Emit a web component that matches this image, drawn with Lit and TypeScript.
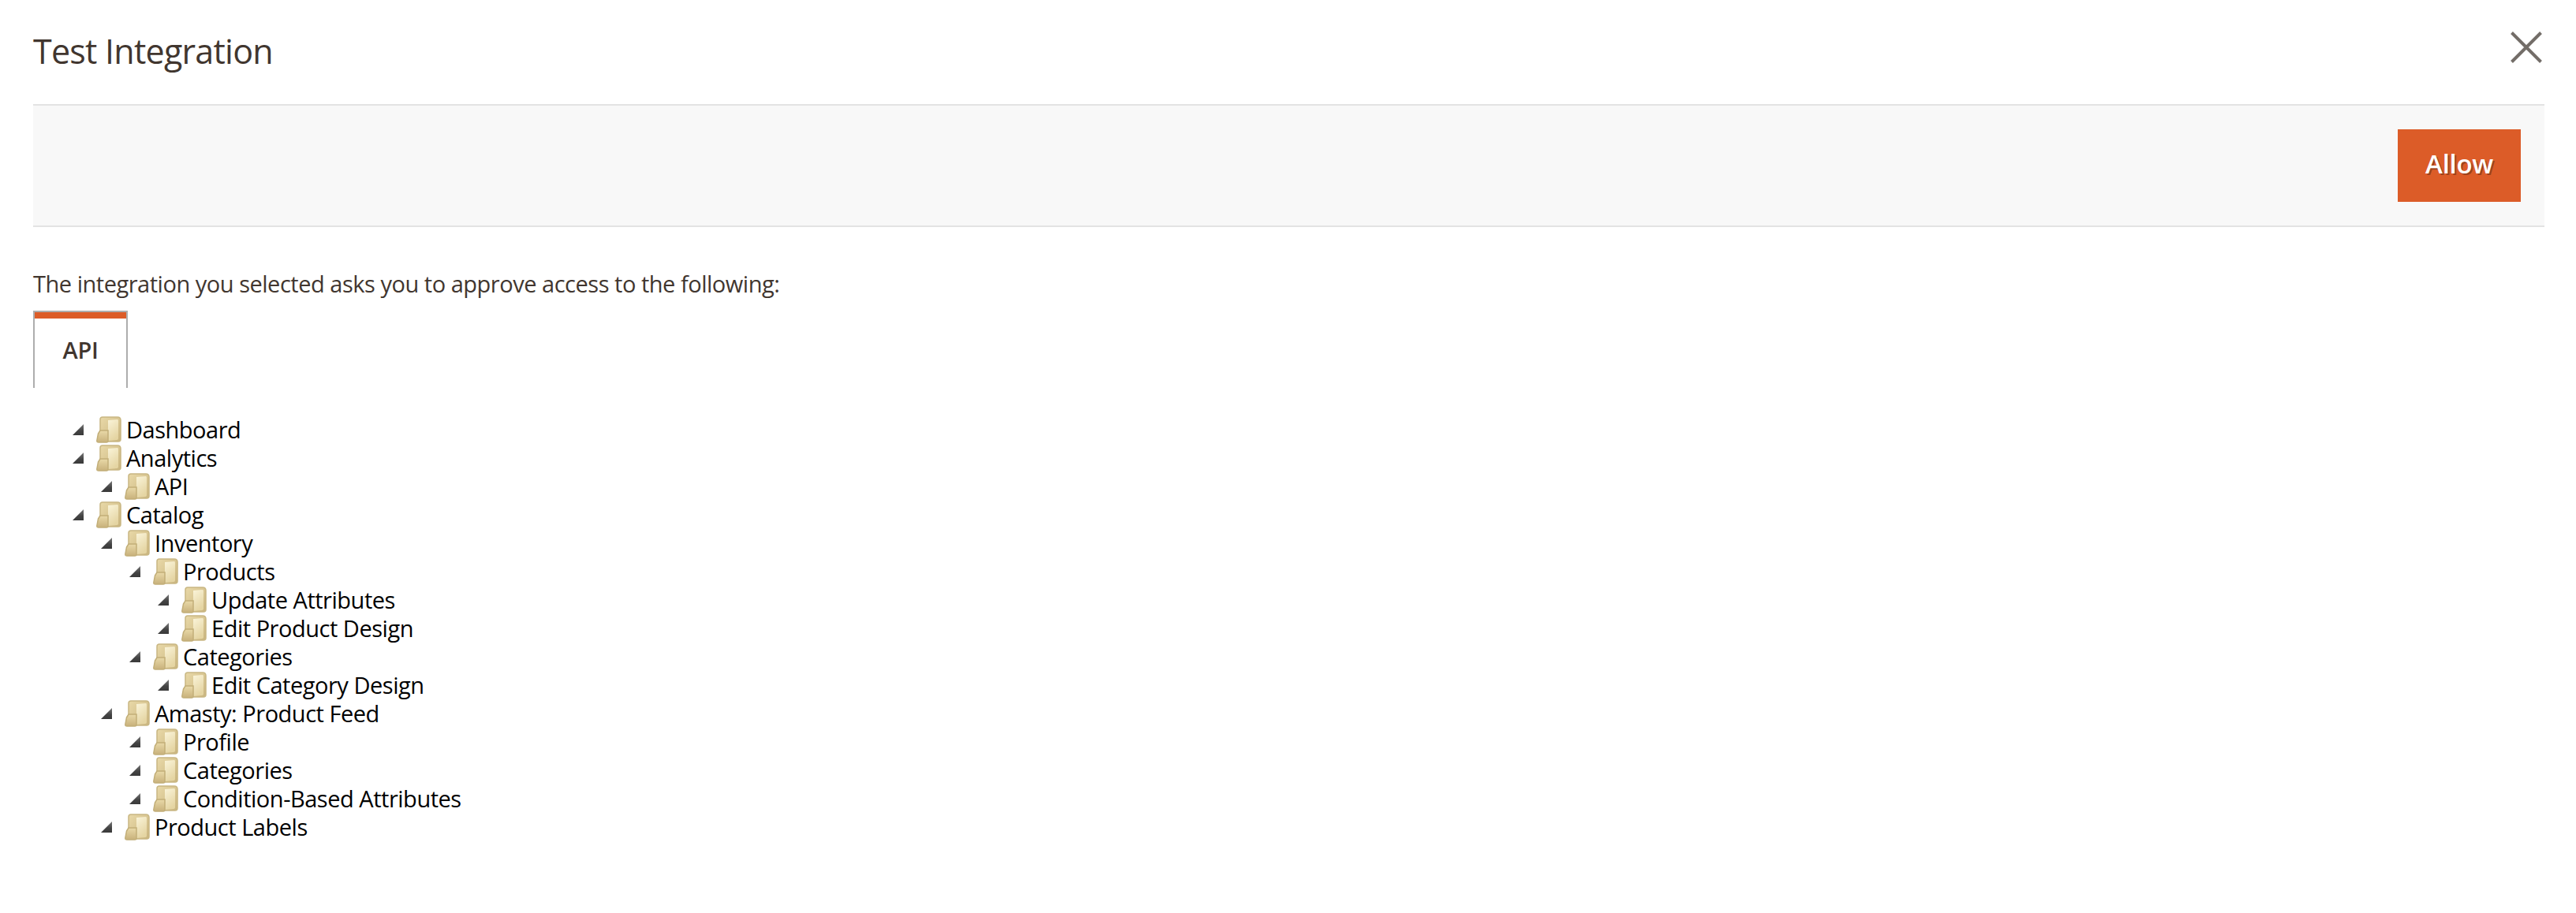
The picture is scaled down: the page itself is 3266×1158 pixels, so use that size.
import { LitElement, html, css, svg } from "lit";
import { customElement } from "lit/decorators.js";

type Node = { t: string; c?: Node[] };
const tree: Node[] = [
  { t: "Dashboard" },
  { t: "Analytics", c: [{ t: "API" }] },
  {
    t: "Catalog",
    c: [
      {
        t: "Inventory",
        c: [
          { t: "Products", c: [{ t: "Update Attributes" }, { t: "Edit Product Design" }] },
          { t: "Categories", c: [{ t: "Edit Category Design" }] },
        ],
      },
      {
        t: "Amasty: Product Feed",
        c: [{ t: "Profile" }, { t: "Categories" }, { t: "Condition-Based Attributes" }],
      },
      { t: "Product Labels" },
    ],
  },
];

const arrow = svg`<svg class="arrow" width="14" height="14" viewBox="0 0 14 14"><defs><linearGradient id="ag" x1="0" y1="0" x2="0" y2="1"><stop offset="0" stop-color="#777"/><stop offset="0.6" stop-color="#444"/><stop offset="1" stop-color="#3a3a3a"/></linearGradient></defs><path d="M14 0 L14 14 L0 14 Z" fill="url(#ag)"/></svg>`;

const folder = svg`<svg class="folder" width="32" height="34" viewBox="0 0 32 34"><defs>
<linearGradient id="fb" x1="0" y1="0" x2="1" y2="1"><stop offset="0" stop-color="#e9d9a8"/><stop offset="1" stop-color="#c9b47e"/></linearGradient>
<linearGradient id="ff" x1="0" y1="0" x2="0.4" y2="1"><stop offset="0" stop-color="#faf4d9"/><stop offset="1" stop-color="#e5d5a3"/></linearGradient>
<linearGradient id="fs" x1="0" y1="0" x2="0" y2="1"><stop offset="0" stop-color="#e9d9a8"/><stop offset="1" stop-color="#c8b17b"/></linearGradient></defs>
<path d="M5 4 Q5 1 8 1 L27 1 Q31 1 31 5 L31 29 Q31 32 28 32 L8 32 L5 30 Z" fill="url(#fb)" stroke="#c9b783" stroke-width="1.5"/>
<path d="M15 5 L27 4 Q28 4 28 6 L28 28 Q28 30 26 30 L15 31 Z" fill="url(#ff)"/>
<path d="M2.5 22 L5 18 L15 18 L15 31 Q15 33 13 33 L3 33 Q0.8 33 0.8 31 Z" fill="url(#fs)" stroke="#c2ae78" stroke-width="1.5"/>
</svg>`;

@customElement("app-root")
export class AppRoot extends LitElement {
  static styles = css`
    :host {
      display: block;
      width: 3266px;
      height: 1158px;
      background: #fff;
      box-sizing: border-box;
      padding: 0 40px 0 42px;
      font-family: "Open Sans", sans-serif;
      color: #41362f;
    }
    .head {
      height: 132px;
      display: flex;
      justify-content: space-between;
      align-items: flex-start;
    }
    h1 {
      margin: 0;
      padding-top: 35px;
      font-size: 43px;
      letter-spacing: -0.75px;
      line-height: 60px;
      font-weight: 400;
    }
    .close {
      margin: 40px 3px 0 0;
      display: block;
    }
    .bar {
      height: 156px;
      box-sizing: border-box;
      background: #f8f8f8;
      border-top: 2px solid #e3e3e3;
      border-bottom: 2px solid #e3e3e3;
      display: flex;
      justify-content: flex-end;
      padding: 30px 30px 0 0;
    }
    .allow {
      width: 156px;
      height: 92px;
      background: #dc5c28;
      color: #fff;
      font-weight: 600;
      font-size: 33px;
      letter-spacing: -0.3px;
      line-height: 88px;
      text-align: center;
      text-shadow: 2px 2px 0 rgba(0, 0, 0, 0.3);
    }
    .note {
      margin: 0;
      padding-top: 52px;
      font-size: 29px;
      letter-spacing: -0.48px;
      line-height: 40px;
      height: 106px;
      box-sizing: border-box;
    }
    .tab {
      width: 120px;
      height: 98px;
      box-sizing: border-box;
      border: 2px solid #adadad;
      border-bottom: 0;
      font-weight: 600;
      font-size: 29px;
      letter-spacing: -0.3px;
      text-align: center;
      line-height: 52px;
    }
    .tab::before {
      content: "";
      display: block;
      height: 8px;
      background: #dc5c28;
      margin-bottom: 14px;
    }
    ul {
      list-style: none;
      margin: 0;
      padding: 0 0 0 36px;
    }
    .tree {
      margin-top: 35px;
      padding-left: 50px;
      color: #000;
      font-size: 29px;
      letter-spacing: -0.48px;
    }
    .row {
      height: 36px;
      display: flex;
      align-items: center;
      white-space: nowrap;
      line-height: 36px;
    }
    .arrow {
      flex: none;
      margin-right: 16px;
    }
    .folder {
      flex: none;
      margin-right: 6px;
    }
  `;

  private renderNodes(nodes: Node[]): unknown {
    return nodes.map(
      (n) => html`<li>
        <div class="row">${arrow}${folder}<span>${n.t}</span></div>
        ${n.c ? html`<ul>${this.renderNodes(n.c)}</ul>` : ""}
      </li>`
    );
  }

  render() {
    return html`
      <div class="head">
        <h1>Test Integration</h1>
        <svg class="close" width="40" height="40" viewBox="0 0 40 40"><path d="M1.5 1.5 L38.5 38.5 M38.5 1.5 L1.5 38.5" stroke="#736d68" stroke-width="4" fill="none"/></svg>
      </div>
      <div class="bar"><div class="allow">Allow</div></div>
      <p class="note">The integration you selected asks you to approve access to the following:</p>
      <div class="tab">API</div>
      <ul class="tree">${this.renderNodes(tree)}</ul>
    `;
  }
}
